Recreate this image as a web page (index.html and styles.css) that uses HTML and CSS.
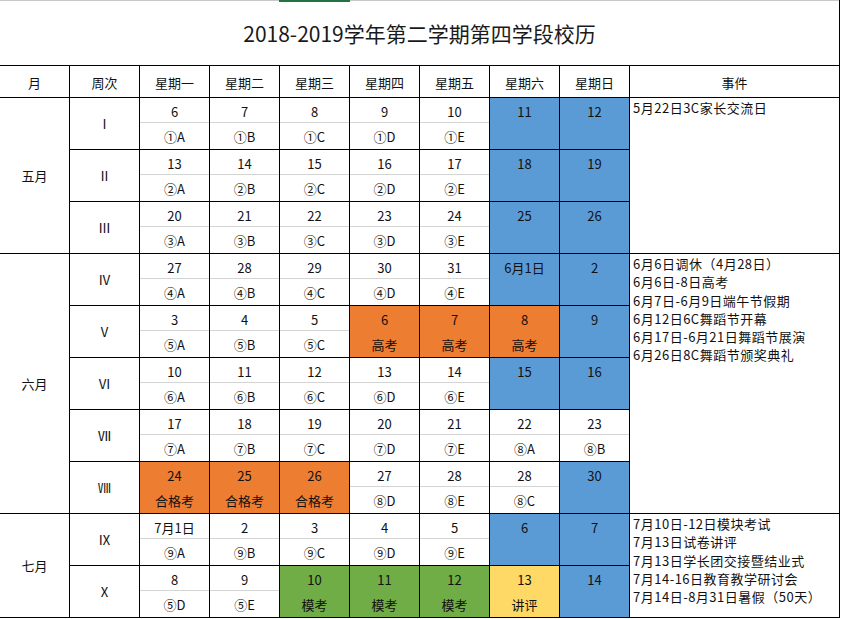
FILE: index.html
```html
<!DOCTYPE html>
<html lang="zh">
<head>
<meta charset="utf-8">
<title>校历</title>
<link rel="stylesheet" href="styles.css">
</head>
<body>
<div class="sheet">
  <div class="title">
    <div class="topbar"><span class="tb-gray tb-left"></span><span class="tb-green"></span><span class="tb-gray tb-fill"></span></div>
    <div class="title-text">2018-2019学年第二学期第四学段校历</div>
  </div>

  <div class="h">月</div><div class="h">周次</div><div class="h">星期一</div><div class="h">星期二</div><div class="h">星期三</div><div class="h">星期四</div><div class="h">星期五</div><div class="h">星期六</div><div class="h">星期日</div><div class="h">事件</div>

  <!-- Week I -->
  <div class="m span3">五月</div>
  <div class="w">Ⅰ</div>
  <div class="d"><div class="n">6</div><div class="l">①A</div></div>
  <div class="d"><div class="n">7</div><div class="l">①B</div></div>
  <div class="d"><div class="n">8</div><div class="l">①C</div></div>
  <div class="d"><div class="n">9</div><div class="l">①D</div></div>
  <div class="d"><div class="n">10</div><div class="l">①E</div></div>
  <div class="d blue"><div class="n">11</div><div class="l"></div></div>
  <div class="d blue"><div class="n">12</div><div class="l"></div></div>
  <div class="ev span3"><div>5月22日3C家长交流日</div></div>

  <!-- Week II -->
  <div class="w">Ⅱ</div>
  <div class="d"><div class="n">13</div><div class="l">②A</div></div>
  <div class="d"><div class="n">14</div><div class="l">②B</div></div>
  <div class="d"><div class="n">15</div><div class="l">②C</div></div>
  <div class="d"><div class="n">16</div><div class="l">②D</div></div>
  <div class="d"><div class="n">17</div><div class="l">②E</div></div>
  <div class="d blue"><div class="n">18</div><div class="l"></div></div>
  <div class="d blue"><div class="n">19</div><div class="l"></div></div>

  <!-- Week III -->
  <div class="w">Ⅲ</div>
  <div class="d"><div class="n">20</div><div class="l">③A</div></div>
  <div class="d"><div class="n">21</div><div class="l">③B</div></div>
  <div class="d"><div class="n">22</div><div class="l">③C</div></div>
  <div class="d"><div class="n">23</div><div class="l">③D</div></div>
  <div class="d"><div class="n">24</div><div class="l">③E</div></div>
  <div class="d blue"><div class="n">25</div><div class="l"></div></div>
  <div class="d blue"><div class="n">26</div><div class="l"></div></div>

  <!-- Week IV -->
  <div class="m span5">六月</div>
  <div class="w">Ⅳ</div>
  <div class="d"><div class="n">27</div><div class="l">④A</div></div>
  <div class="d"><div class="n">28</div><div class="l">④B</div></div>
  <div class="d"><div class="n">29</div><div class="l">④C</div></div>
  <div class="d"><div class="n">30</div><div class="l">④D</div></div>
  <div class="d"><div class="n">31</div><div class="l">④E</div></div>
  <div class="d blue"><div class="n">6月1日</div><div class="l"></div></div>
  <div class="d blue"><div class="n">2</div><div class="l"></div></div>
  <div class="ev span5">
    <div>6月6日调休（4月28日）</div>
    <div>6月6日-8日高考</div>
    <div>6月7日-6月9日端午节假期</div>
    <div>6月12日6C舞蹈节开幕</div>
    <div>6月17日-6月21日舞蹈节展演</div>
    <div>6月26日8C舞蹈节颁奖典礼</div>
  </div>

  <!-- Week V -->
  <div class="w">Ⅴ</div>
  <div class="d"><div class="n">3</div><div class="l">⑤A</div></div>
  <div class="d"><div class="n">4</div><div class="l">⑤B</div></div>
  <div class="d"><div class="n">5</div><div class="l">⑤C</div></div>
  <div class="d orange"><div class="n">6</div><div class="l">高考</div></div>
  <div class="d orange"><div class="n">7</div><div class="l">高考</div></div>
  <div class="d orange"><div class="n">8</div><div class="l">高考</div></div>
  <div class="d blue"><div class="n">9</div><div class="l"></div></div>

  <!-- Week VI -->
  <div class="w">Ⅵ</div>
  <div class="d"><div class="n">10</div><div class="l">⑥A</div></div>
  <div class="d"><div class="n">11</div><div class="l">⑥B</div></div>
  <div class="d"><div class="n">12</div><div class="l">⑥C</div></div>
  <div class="d"><div class="n">13</div><div class="l">⑥D</div></div>
  <div class="d"><div class="n">14</div><div class="l">⑥E</div></div>
  <div class="d blue"><div class="n">15</div><div class="l"></div></div>
  <div class="d blue"><div class="n">16</div><div class="l"></div></div>

  <!-- Week VII -->
  <div class="w">Ⅶ</div>
  <div class="d"><div class="n">17</div><div class="l">⑦A</div></div>
  <div class="d"><div class="n">18</div><div class="l">⑦B</div></div>
  <div class="d"><div class="n">19</div><div class="l">⑦C</div></div>
  <div class="d"><div class="n">20</div><div class="l">⑦D</div></div>
  <div class="d"><div class="n">21</div><div class="l">⑦E</div></div>
  <div class="d"><div class="n">22</div><div class="l">⑧A</div></div>
  <div class="d"><div class="n">23</div><div class="l">⑧B</div></div>

  <!-- Week VIII -->
  <div class="w">Ⅷ</div>
  <div class="d orange"><div class="n">24</div><div class="l">合格考</div></div>
  <div class="d orange"><div class="n">25</div><div class="l">合格考</div></div>
  <div class="d orange"><div class="n">26</div><div class="l">合格考</div></div>
  <div class="d"><div class="n">27</div><div class="l">⑧D</div></div>
  <div class="d"><div class="n">28</div><div class="l">⑧E</div></div>
  <div class="d"><div class="n">28</div><div class="l">⑧C</div></div>
  <div class="d blue"><div class="n">30</div><div class="l"></div></div>

  <!-- Week IX -->
  <div class="m span2">七月</div>
  <div class="w">Ⅸ</div>
  <div class="d"><div class="n">7月1日</div><div class="l">⑨A</div></div>
  <div class="d"><div class="n">2</div><div class="l">⑨B</div></div>
  <div class="d"><div class="n">3</div><div class="l">⑨C</div></div>
  <div class="d"><div class="n">4</div><div class="l">⑨D</div></div>
  <div class="d"><div class="n">5</div><div class="l">⑨E</div></div>
  <div class="d blue"><div class="n">6</div><div class="l"></div></div>
  <div class="d blue"><div class="n">7</div><div class="l"></div></div>
  <div class="ev span2">
    <div>7月10日-12日模块考试</div>
    <div>7月13日试卷讲评</div>
    <div>7月13日学长团交接暨结业式</div>
    <div>7月14-16日教育教学研讨会</div>
    <div>7月14日-8月31日暑假（50天）</div>
  </div>

  <!-- Week X -->
  <div class="w">Ⅹ</div>
  <div class="d"><div class="n">8</div><div class="l">⑤D</div></div>
  <div class="d"><div class="n">9</div><div class="l">⑤E</div></div>
  <div class="d green"><div class="n">10</div><div class="l">模考</div></div>
  <div class="d green"><div class="n">11</div><div class="l">模考</div></div>
  <div class="d green"><div class="n">12</div><div class="l">模考</div></div>
  <div class="d yellow"><div class="n">13</div><div class="l">讲评</div></div>
  <div class="d blue"><div class="n">14</div><div class="l"></div></div>
</div>
</body>
</html>
```

FILE: styles.css
```css
html, body {
  margin: 0;
  padding: 0;
  background: #fff;
}

body {
  font-family: "Noto Sans CJK SC", "Liberation Sans", sans-serif;
  color: #111;
  font-size: 13px;
}

.sheet {
  display: grid;
  grid-template-columns: repeat(9, 69px) 209px;
  grid-template-rows: 65px 31px repeat(10, 51px);
  gap: 1px;
  background: #000;
  padding: 0 1px 1px 0;
  width: 840px;
  box-sizing: border-box;
}

.sheet > div {
  background: #fff;
}

.title {
  grid-column: 1 / -1;
  display: flex;
  flex-direction: column;
}

.topbar {
  display: flex;
  height: 2px;
}

.tb-gray {
  background: #c8c8c8;
  height: 1px;
}

.tb-left {
  width: 279px;
}

.tb-green {
  width: 71px;
  height: 2px;
  background: #217346;
}

.tb-fill {
  flex: 1;
}

.title-text {
  flex: 1;
  display: flex;
  align-items: center;
  justify-content: center;
  font-size: 21px;
  color: #1a1a1a;
  padding-bottom: 1px;
}

.h {
  display: flex;
  align-items: center;
  justify-content: center;
  font-size: 13px;
  padding-top: 2px;
}

.m {
  display: flex;
  align-items: center;
  justify-content: center;
  font-size: 13px;
}

.w {
  display: flex;
  align-items: center;
  justify-content: center;
  font-size: 13px;
}

.span2 { grid-row: span 2; }
.span3 { grid-row: span 3; }
.span5 { grid-row: span 5; }

.d {
  display: flex;
  flex-direction: column;
}

.d .n,
.d .l {
  height: 25px;
  display: flex;
  align-items: center;
  justify-content: center;
  padding-top: 2px;
  box-sizing: border-box;
  font-size: 13px;
  white-space: nowrap;
}

.d .n {
  border-bottom: 1px solid #d4d4d4;
}

.sheet > .blue { background: #5b9bd5; }
.sheet > .orange { background: #ed7d31; }
.sheet > .green { background: #70ad47; }
.sheet > .yellow { background: #ffd966; }

.blue .n,
.orange .n,
.green .n,
.yellow .n {
  border-bottom-color: transparent;
}

.ev {
  padding: 1px 0 0 3px;
  font-size: 13px;
  line-height: 18.3px;
  letter-spacing: 0.5px;
  white-space: nowrap;
}
```
